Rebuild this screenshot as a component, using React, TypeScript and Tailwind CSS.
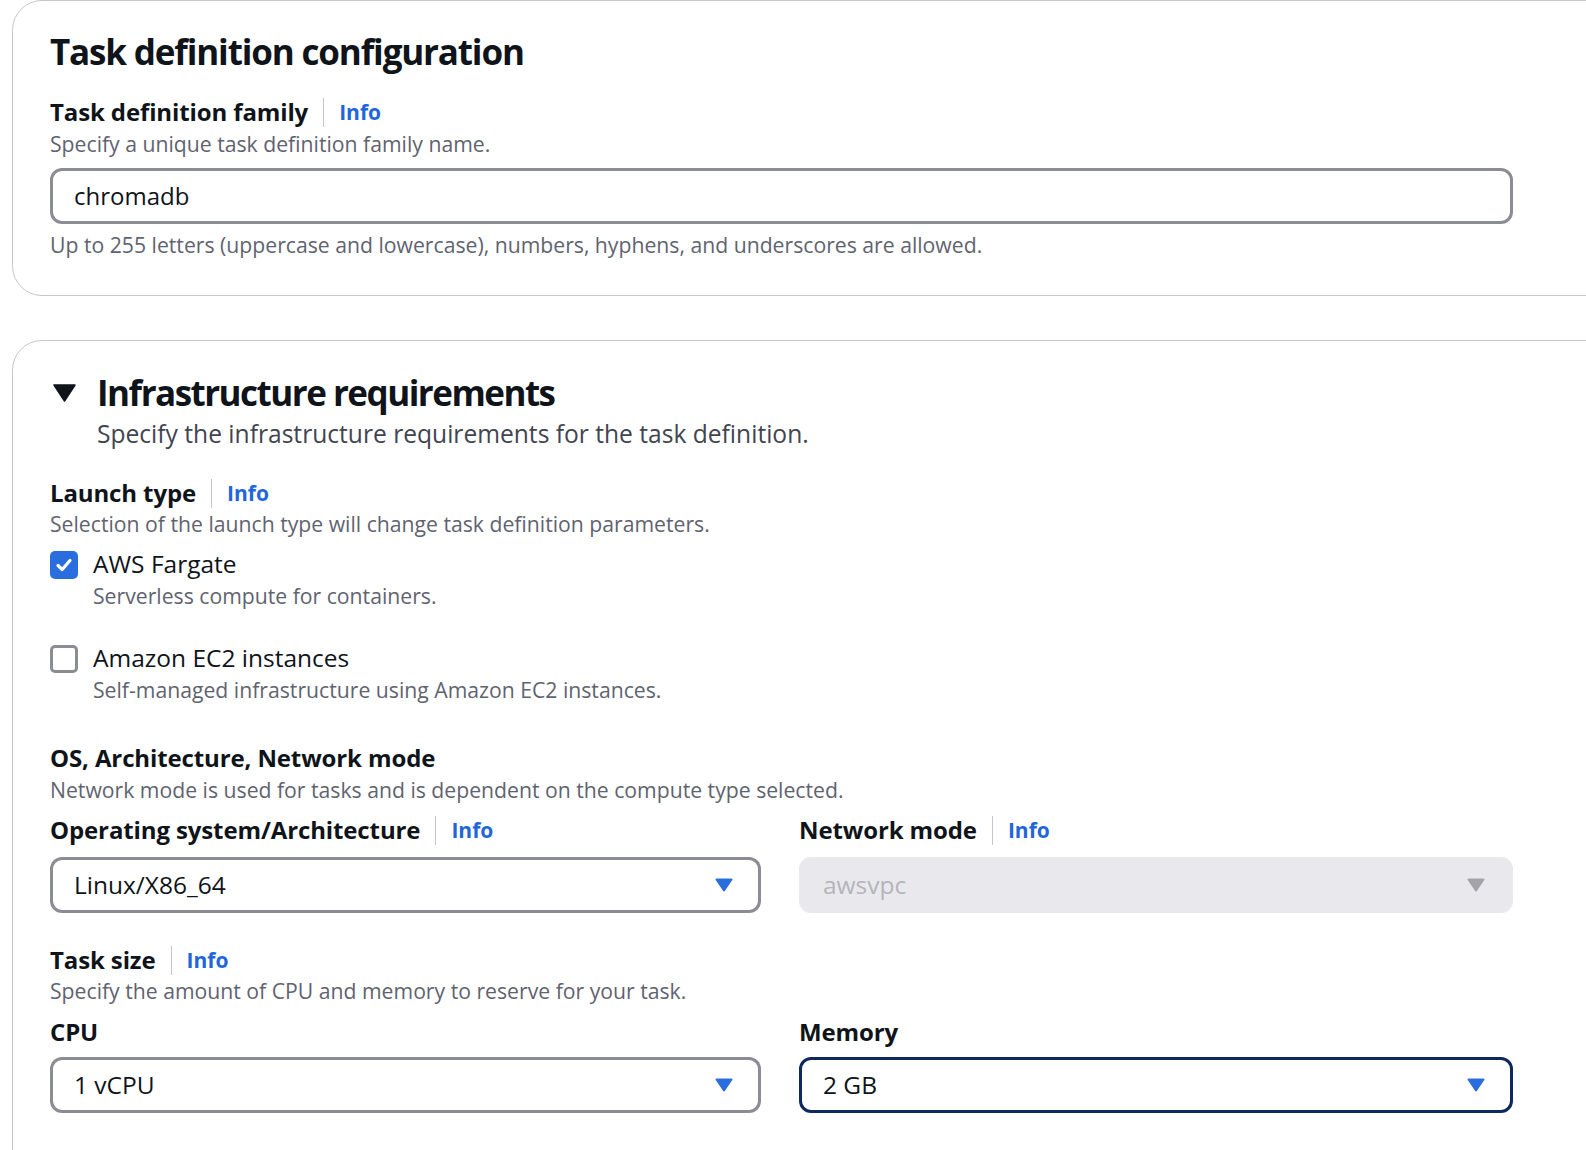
import React from "react";

function Info() {
  return <span className="text-[21px] font-bold text-[#1f66dc] leading-[32px]">Info</span>;
}

function Label({ text, info }: { text: string; info?: boolean }) {
  return (
    <div className="flex items-center h-[32px]">
      <span className="text-[24px] font-bold leading-[32px] text-[#0f141a] tracking-[-0.005em]">{text}</span>
      {info && (
        <>
          <span className="mx-[15px] w-px h-[29px] bg-[#c6c6cd]" />
          <Info />
        </>
      )}
    </div>
  );
}

function Desc({ text, className = "" }: { text: string; className?: string }) {
  return <div className={"text-[21.2px] leading-[30px] text-[#5f6370] " + className}>{text}</div>;
}

function Caret({ color }: { color: string }) {
  return (
    <svg width="18" height="14" viewBox="0 0 18 14">
      <path d="M1.5 1.5 H16.5 L9 12.5 Z" fill={color} stroke={color} strokeWidth="2" strokeLinejoin="round" />
    </svg>
  );
}

function Select({ value, variant = "normal" }: { value: string; variant?: "normal" | "disabled" | "focus" }) {
  const box =
    variant === "disabled"
      ? "bg-[#e9e9ed] border-[#e9e9ed] text-[#b4b4bb]"
      : variant === "focus"
      ? "bg-white border-[#0e2a5c] text-[#0f141a]"
      : "bg-white border-[#8c8c94] text-[#0f141a]";
  const caret = variant === "disabled" ? "#a3a3aa" : "#2a6ddf";
  return (
    <div className={"flex items-center justify-between h-[56px] rounded-[12px] border-[3px] pl-[21px] pr-[25px] " + box}>
      <span className="text-[24.5px] leading-[32px]">{value}</span>
      <Caret color={caret} />
    </div>
  );
}

function Checkbox({ checked }: { checked: boolean }) {
  if (checked) {
    return (
      <div className="w-[28px] h-[28px] rounded-[5px] bg-[#2a6ddf] flex items-center justify-center shrink-0">
        <svg width="20" height="20" viewBox="0 0 20 20">
          <path d="M4 10.5 L8.2 14.5 L16 5.5" fill="none" stroke="white" strokeWidth="3.2" strokeLinecap="round" strokeLinejoin="round" />
        </svg>
      </div>
    );
  }
  return <div className="w-[28px] h-[28px] rounded-[5px] border-[3px] border-[#8c8c94] bg-white shrink-0" />;
}

function Option({ checked, title, desc, className = "" }: { checked: boolean; title: string; desc: string; className?: string }) {
  return (
    <div className={"flex items-start gap-[15px] " + className}>
      <div className="mt-[4px]">
        <Checkbox checked={checked} />
      </div>
      <div className="flex flex-col">
        <div className="text-[24.5px] leading-[34px] text-[#0f141a]">{title}</div>
        <Desc text={desc} />
      </div>
    </div>
  );
}

export default function App() {
  return (
    <div className="w-[1586px] h-[1150px] overflow-hidden bg-white font-['Open_Sans',sans-serif]">
      {/* Card 1 */}
      <div className="ml-[12px] w-[1640px] border border-[#c6c6cd] rounded-[30px] pt-[29px] pb-[35px] pl-[37px]">
        <div className="w-[1463px]">
          <h1 className="text-[35px] leading-[44px] font-bold text-[#0f141a] tracking-[-0.033em]">Task definition configuration</h1>
          <div className="mt-[22px]">
            <Label text="Task definition family" info />
          </div>
          <Desc text="Specify a unique task definition family name." className="mt-[1px]" />
          <div className="mt-[9px] h-[56px] rounded-[12px] border-[3px] border-[#8c8c94] flex items-center pl-[21px]">
            <span className="text-[24px] leading-[32px] text-[#0f141a]">chromadb</span>
          </div>
          <Desc
            text="Up to 255 letters (uppercase and lowercase), numbers, hyphens, and underscores are allowed."
            className="mt-[6px]"
          />
        </div>
      </div>

      {/* Card 2 */}
      <div className="mt-[44px] ml-[12px] w-[1640px] h-[900px] border border-[#c6c6cd] rounded-[30px] pt-[30px] pl-[37px]">
        <div className="w-[1463px]">
          <div className="flex items-center h-[44px]">
            <div className="w-[47px] flex items-center">
              <svg width="28" height="20" viewBox="0 0 28 20">
                <path d="M4 2 H25 L14.5 18 Z" fill="#0f141a" stroke="#0f141a" strokeWidth="1.5" strokeLinejoin="round" />
              </svg>
            </div>
            <h2 className="text-[35px] leading-[44px] font-bold text-[#0f141a] tracking-[-0.043em]">Infrastructure requirements</h2>
          </div>
          <div className="pl-[47px] mt-[2px] text-[24.6px] leading-[34px] text-[#414550]">
            Specify the infrastructure requirements for the task definition.
          </div>

          <div className="mt-[26px]">
            <Label text="Launch type" info />
          </div>
          <Desc text="Selection of the launch type will change task definition parameters." />

          <Option className="mt-[8px]" checked title="AWS Fargate" desc="Serverless compute for containers." />
          <Option
            className="mt-[30px]"
            checked={false}
            title="Amazon EC2 instances"
            desc="Self-managed infrastructure using Amazon EC2 instances."
          />

          <div className="mt-[37px]">
            <Label text="OS, Architecture, Network mode" />
          </div>
          <Desc text="Network mode is used for tasks and is dependent on the compute type selected." className="mt-[1px]" />

          <div className="mt-[9px] grid grid-cols-[711px_714px] gap-x-[38px]">
            <div>
              <Label text="Operating system/Architecture" info />
              <div className="mt-[11px]">
                <Select value="Linux/X86_64" />
              </div>
            </div>
            <div>
              <Label text="Network mode" info />
              <div className="mt-[11px]">
                <Select value="awsvpc" variant="disabled" />
              </div>
            </div>
          </div>

          <div className="mt-[31px]">
            <Label text="Task size" info />
          </div>
          <Desc text="Specify the amount of CPU and memory to reserve for your task." />

          <div className="mt-[10px] grid grid-cols-[711px_714px] gap-x-[38px]">
            <div>
              <Label text="CPU" />
              <div className="mt-[9px]">
                <Select value="1 vCPU" />
              </div>
            </div>
            <div>
              <Label text="Memory" />
              <div className="mt-[9px]">
                <Select value="2 GB" variant="focus" />
              </div>
            </div>
          </div>
        </div>
      </div>
    </div>
  );
}
